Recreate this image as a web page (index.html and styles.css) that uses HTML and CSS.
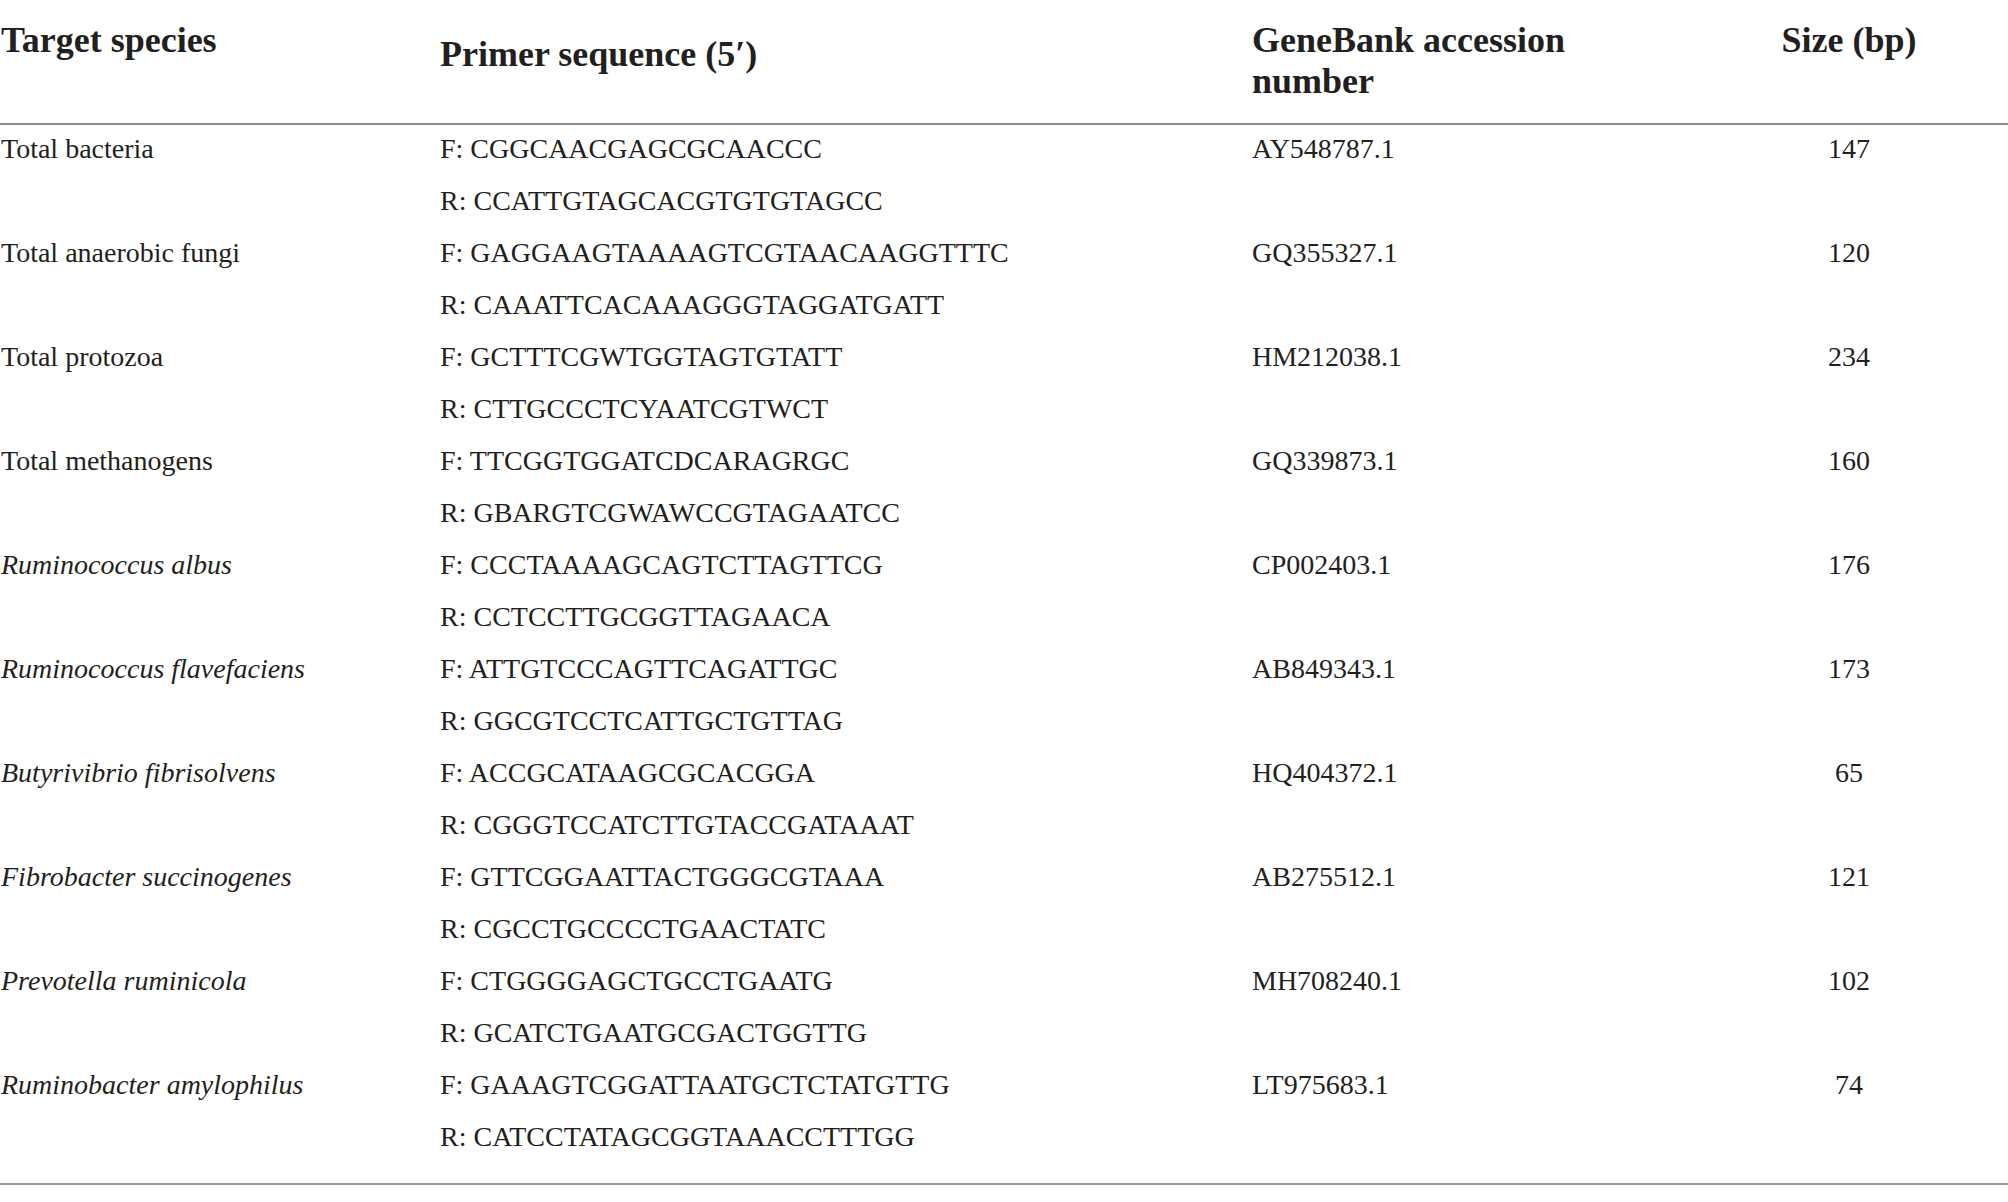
FILE: index.html
```html
<!DOCTYPE html>
<html lang="en">
<head>
<meta charset="utf-8">
<title>Primers</title>
<link rel="stylesheet" href="styles.css">
</head>
<body>
<table class="primers">
  <colgroup>
    <col class="c-species">
    <col class="c-primer">
    <col class="c-acc">
    <col class="c-size">
  </colgroup>
  <thead>
    <tr>
      <th class="h-species">Target species</th>
      <th class="h-primer">Primer sequence (5′)</th>
      <th class="h-acc">GeneBank accession<br>number</th>
      <th class="h-size">Size (bp)</th>
    </tr>
  </thead>
  <tbody>
    <tr>
      <td class="species">Total bacteria</td>
      <td class="primer">F: CGGCAACGAGCGCAACCC<br>R: CCATTGTAGCACGTGTGTAGCC</td>
      <td class="acc">AY548787.1</td>
      <td class="size">147</td>
    </tr>
    <tr>
      <td class="species">Total anaerobic fungi</td>
      <td class="primer">F: GAGGAAGTAAAAGTCGTAACAAGGTTTC<br>R: CAAATTCACAAAGGGTAGGATGATT</td>
      <td class="acc">GQ355327.1</td>
      <td class="size">120</td>
    </tr>
    <tr>
      <td class="species">Total protozoa</td>
      <td class="primer">F: GCTTTCGWTGGTAGTGTATT<br>R: CTTGCCCTCYAATCGTWCT</td>
      <td class="acc">HM212038.1</td>
      <td class="size">234</td>
    </tr>
    <tr>
      <td class="species">Total methanogens</td>
      <td class="primer">F: TTCGGTGGATCDCARAGRGC<br>R: GBARGTCGWAWCCGTAGAATCC</td>
      <td class="acc">GQ339873.1</td>
      <td class="size">160</td>
    </tr>
    <tr>
      <td class="species"><i>Ruminococcus albus</i></td>
      <td class="primer">F: CCCTAAAAGCAGTCTTAGTTCG<br>R: CCTCCTTGCGGTTAGAACA</td>
      <td class="acc">CP002403.1</td>
      <td class="size">176</td>
    </tr>
    <tr>
      <td class="species"><i>Ruminococcus flavefaciens</i></td>
      <td class="primer">F: ATTGTCCCAGTTCAGATTGC<br>R: GGCGTCCTCATTGCTGTTAG</td>
      <td class="acc">AB849343.1</td>
      <td class="size">173</td>
    </tr>
    <tr>
      <td class="species"><i>Butyrivibrio fibrisolvens</i></td>
      <td class="primer">F: ACCGCATAAGCGCACGGA<br>R: CGGGTCCATCTTGTACCGATAAAT</td>
      <td class="acc">HQ404372.1</td>
      <td class="size">65</td>
    </tr>
    <tr>
      <td class="species"><i>Fibrobacter succinogenes</i></td>
      <td class="primer">F: GTTCGGAATTACTGGGCGTAAA<br>R: CGCCTGCCCCTGAACTATC</td>
      <td class="acc">AB275512.1</td>
      <td class="size">121</td>
    </tr>
    <tr>
      <td class="species"><i>Prevotella ruminicola</i></td>
      <td class="primer">F: CTGGGGAGCTGCCTGAATG<br>R: GCATCTGAATGCGACTGGTTG</td>
      <td class="acc">MH708240.1</td>
      <td class="size">102</td>
    </tr>
    <tr class="last">
      <td class="species"><i>Ruminobacter amylophilus</i></td>
      <td class="primer">F: GAAAGTCGGATTAATGCTCTATGTTG<br>R: CATCCTATAGCGGTAAACCTTTGG</td>
      <td class="acc">LT975683.1</td>
      <td class="size">74</td>
    </tr>
  </tbody>
</table>
</body>
</html>
```

FILE: styles.css
```css
html, body {
  margin: 0;
  padding: 0;
  background: #ffffff;
}

body {
  font-family: "Liberation Serif", "Times New Roman", serif;
  color: #231f20;
}

.primers {
  width: 2008px;
  table-layout: fixed;
  border-collapse: separate;
  border-spacing: 0;
}

.c-species { width: 439px; }
.c-primer { width: 812px; }
.c-acc { width: 439px; }
.c-size { width: 318px; }

.primers th {
  font-weight: bold;
  font-size: 36px;
  line-height: 41px;
  text-align: left;
  vertical-align: top;
  height: 103px;
  padding: 20px 0 0 0;
  box-shadow: 0 2px 0 #8d8d8d;
}

.primers th.h-species { padding-left: 1px; }
.primers th.h-primer { padding-top: 34px; height: 89px; padding-left: 1px; }
.primers th.h-acc { padding-left: 1px; }
.primers th.h-size { text-align: center; }

.primers td {
  font-size: 28px;
  line-height: 52px;
  vertical-align: top;
  padding: 0;
  white-space: nowrap;
}

.primers td.species { padding-left: 1px; }
.primers td.primer { padding-left: 1px; }
.primers td.acc { padding-left: 1px; }
.primers td.size { text-align: center; }

.primers tr.last td {
  padding-bottom: 20px;
  border-bottom: 2px solid #9a9a9a;
}
```
